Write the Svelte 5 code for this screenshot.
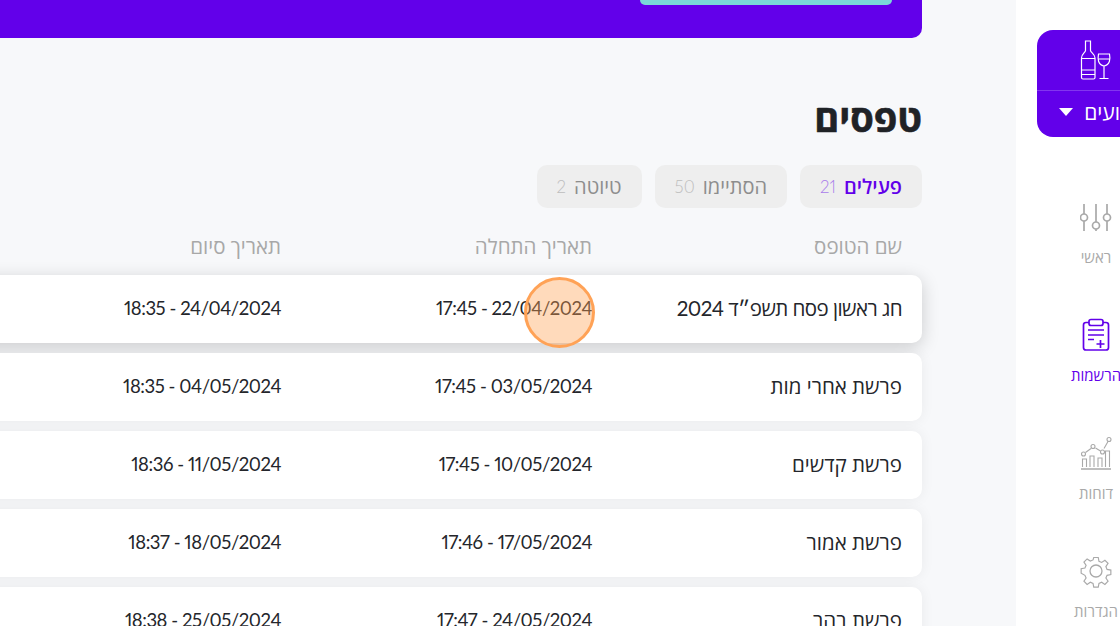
<script>
  const rows = [
    { name: "חג ראשון פסח תשפ״ד 2024", start: "17:45 - 22/04/2024", end: "18:35 - 24/04/2024", raised: true },
    { name: "פרשת אחרי מות", start: "17:45 - 03/05/2024", end: "18:35 - 04/05/2024" },
    { name: "פרשת קדשים", start: "17:45 - 10/05/2024", end: "18:36 - 11/05/2024" },
    { name: "פרשת אמור", start: "17:46 - 17/05/2024", end: "18:37 - 18/05/2024" },
    { name: "פרשת בהר", start: "17:47 - 24/05/2024", end: "18:38 - 25/05/2024" },
  ];

  const tabs = [
    { label: "פעילים", count: 21, active: true },
    { label: "הסתיימו", count: 50 },
    { label: "טיוטה", count: 2 },
  ];
</script>

<div class="page" dir="rtl">
  <aside class="sidebar">
    <div class="event-card">
      <div class="event-icon">
        <svg width="32" height="40" viewBox="0 0 32 40" fill="none" stroke="currentColor" stroke-width="1.2">
          <path d="M5.500 1h5v9.500c0 2 4.500 3.500 4.500 7.500v19.500q0 1.500-1.500 1.500h-10.500q-1.500 0-1.500-1.500v-19.500c0-4 4-5.500 4-7.500z" />
          <path d="M1 18.500h14M1 30h14M1 34.500h14" />
          <path d="M18.500 14h11c1 5 .5 11-5.500 12c-6-1-6.500-7-5.500-12zM18.300 19h11.400M24 26v12M19.500 38.500h9" />
        </svg>
      </div>
      <div class="event-select">
        <span class="caret"></span>
        <span>אירועים</span>
      </div>
    </div>

    <nav class="nav">
      <div class="nav-item">
        <svg width="32" height="32" viewBox="0 0 32 32" fill="none" stroke="currentColor" stroke-width="1.7">
          <path d="M4 3v10M4 20v10M16 3v18M16 28v2M27 3v10M27 20v10" />
          <circle cx="4" cy="16.500" r="3.500" />
          <circle cx="16" cy="24.500" r="3.500" />
          <circle cx="27" cy="16.500" r="3.500" />
        </svg>
        <span>ראשי</span>
      </div>
      <div class="nav-item active">
        <svg width="28" height="34" viewBox="0 0 28 34" fill="none" stroke="currentColor" stroke-width="1.7">
          <path d="M7 4.500h-3q-2.500 0-2.500 2.500v22.500q0 2.500 2.500 2.500h20q2.500 0 2.500-2.500v-22.500q0-2.500-2.500-2.500h-3" />
          <rect x="7" y="1.500" width="14" height="6" rx="2" />
          <path d="M6 12h16M6 17h16M6 21.500h6M18.500 22v8M14.500 26h8" />
        </svg>
        <span>הרשמות</span>
      </div>
      <div class="nav-item">
        <svg width="32" height="34" viewBox="0 0 32 34" fill="none" stroke="currentColor" stroke-width="1.100">
          <path d="M1 33h30" stroke-width="1.500" />
          <path d="M2.500 31v-8h4v8M10 31v-11h4v11M18 31v-9h4v9M25.500 31v-16h4v16" />
          <path d="M5.500 16.500l5.500-4M15.500 12l5 3M24 12.500l4-7" />
          <circle cx="3.500" cy="18" r="2" />
          <circle cx="13" cy="10.500" r="2" />
          <circle cx="22.500" cy="16" r="2" />
          <circle cx="29" cy="3.500" r="2" />
        </svg>
        <span>דוחות</span>
      </div>
      <div class="nav-item">
        <svg width="32" height="32" viewBox="0 0 32 32" fill="none" stroke="currentColor" stroke-width="1.300">
          <circle cx="16" cy="16" r="6" />
          <path d="M13.500 1h5l.8 4.200 3 1.300 3.600-2.400 3.500 3.500-2.400 3.600 1.300 3 4.200.8v5l-4.200.8-1.300 3 2.400 3.600-3.500 3.500-3.600-2.400-3 1.300-.8 4.200h-5l-.8-4.200-3-1.300-3.600 2.400-3.500-3.500 2.400-3.600-1.300-3L-.5 18.500v-5l4.200-.8 1.300-3-2.400-3.600 3.500-3.500 3.600 2.400 3-1.300z" transform="translate(1.600 1.600) scale(.9)" />
        </svg>
        <span>הגדרות</span>
      </div>
    </nav>
  </aside>

  <main class="main">
    <div class="banner">
      <div class="banner-btn"></div>
    </div>

    <h1 class="title">טפסים</h1>

    <div class="tabs">
      {#each tabs as tab}
        <div class="tab" class:active={tab.active}>
          <span>{tab.label}</span>
          <span class="count">{tab.count}</span>
        </div>
      {/each}
    </div>

    <div class="table-head">
      <span>שם הטופס</span>
      <span>תאריך התחלה</span>
      <span>תאריך סיום</span>
    </div>

    <div class="table-body">
      {#each rows as row}
        <div class="row" class:raised={row.raised}>
          <span class="name">{row.name}</span>
          <span dir="ltr" class="date">{row.start}</span>
          <span dir="ltr" class="date">{row.end}</span>
        </div>
      {/each}
    </div>
  </main>

  <div class="click-dot"></div>
</div>

<style>
  :global(body) {
    margin: 0;
    background: #f7f8fa;
  }

  .page {
    position: relative;
    display: flex;
    width: 1120px;
    height: 626px;
    overflow: hidden;
    font-family: "Lato", "Open Sans", "Liberation Sans", sans-serif;
    font-variant-numeric: proportional-nums;
    color: #24262b;
  }

  .sidebar {
    flex: 0 0 160px;
    margin-right: -56px;
    padding: 30px 21px 0;
    box-sizing: border-box;
    background: #fff;
  }

  .event-card {
    height: 107px;
    border-radius: 16px;
    background: #6200ea;
    color: #fff;
  }

  .event-icon {
    display: flex;
    justify-content: center;
    align-items: center;
    height: 61px;
    border-bottom: 1px solid #8236ef;
    box-sizing: border-box;
  }

  .event-select {
    display: flex;
    align-items: center;
    justify-content: center;
    gap: 11px;
    height: 41px;
    padding-left: 15px;
    font-size: 21px;
  }

  .caret {
    order: 2;
    width: 0;
    height: 0;
    border-left: 7px solid transparent;
    border-right: 7px solid transparent;
    border-top: 8px solid #fff;
  }

  .nav {
    display: flex;
    flex-direction: column;
    margin-top: 62px;
  }

  .nav-item {
    display: flex;
    flex-direction: column;
    align-items: center;
    height: 118px;
    color: #a9a9a9;
    font-size: 15px;
    white-space: nowrap;
  }

  .nav-item svg {
    height: 36px;
    margin-bottom: 12px;
  }

  .nav-item.active {
    color: #6200ea;
  }

  .main {
    flex: 1;
    min-width: 0;
    margin-left: -30px;
    margin-right: 94px;
  }

  .banner {
    display: flex;
    justify-content: flex-start;
    height: 38px;
    padding-right: 30px;
    border-bottom-right-radius: 10px;
    background: #6200ea;
    box-sizing: border-box;
  }

  .banner-btn {
    width: 252px;
    height: 5px;
    border-radius: 0 0 8px 8px;
    background: #7ad8d8;
  }

  .title {
    margin: 58px 0 0;
    font-size: 38px;
    line-height: 42px;
    font-weight: 700;
    -webkit-text-stroke: 0.6px #1f2226;
    color: #1f2226;
  }

  .tabs {
    display: flex;
    gap: 13px;
    margin-top: 27px;
  }

  .tab {
    display: flex;
    align-items: center;
    gap: 8px;
    height: 43px;
    padding: 0 20px;
    border-radius: 10px;
    background: #eeeeee;
    color: #8d8d8d;
    font-size: 20px;
  }

  .tab.active {
    color: #6200ea;
    font-weight: 600;
  }

  .count {
    font-size: 17px;
    font-weight: 300;
    opacity: 0.5;
  }

  .table-head,
  .row {
    display: grid;
    grid-template-columns: 310px 311px 1fr;
    padding-right: 20px;
  }

  .table-head {
    margin-top: 24px;
    height: 43px;
    font-size: 20.500px;
    color: #a8a8a8;
  }

  .table-body {
    display: flex;
    flex-direction: column;
    gap: 10px;
  }

  .row {
    align-items: center;
    height: 68px;
    padding-bottom: 3px;
    box-sizing: border-box;
    background: #fff;
    border-radius: 10px;
    font-size: 20.500px;
    box-shadow: 0 0 14px rgba(0, 0, 0, 0.06);
  }

  .row.raised {
    box-shadow: 0 4px 18px rgba(0, 0, 0, 0.18);
  }

  .row.raised .name {
    letter-spacing: -0.55px;
  }

  .date {
    font-size: 18.500px;
    letter-spacing: -0.45px;
    text-align: right;
  }

  .click-dot {
    position: absolute;
    left: 524px;
    top: 277px;
    width: 71px;
    height: 71px;
    box-sizing: border-box;
    border: 3px solid #ffa256;
    border-radius: 50%;
    background: rgba(255, 162, 86, 0.4);
  }
</style>
